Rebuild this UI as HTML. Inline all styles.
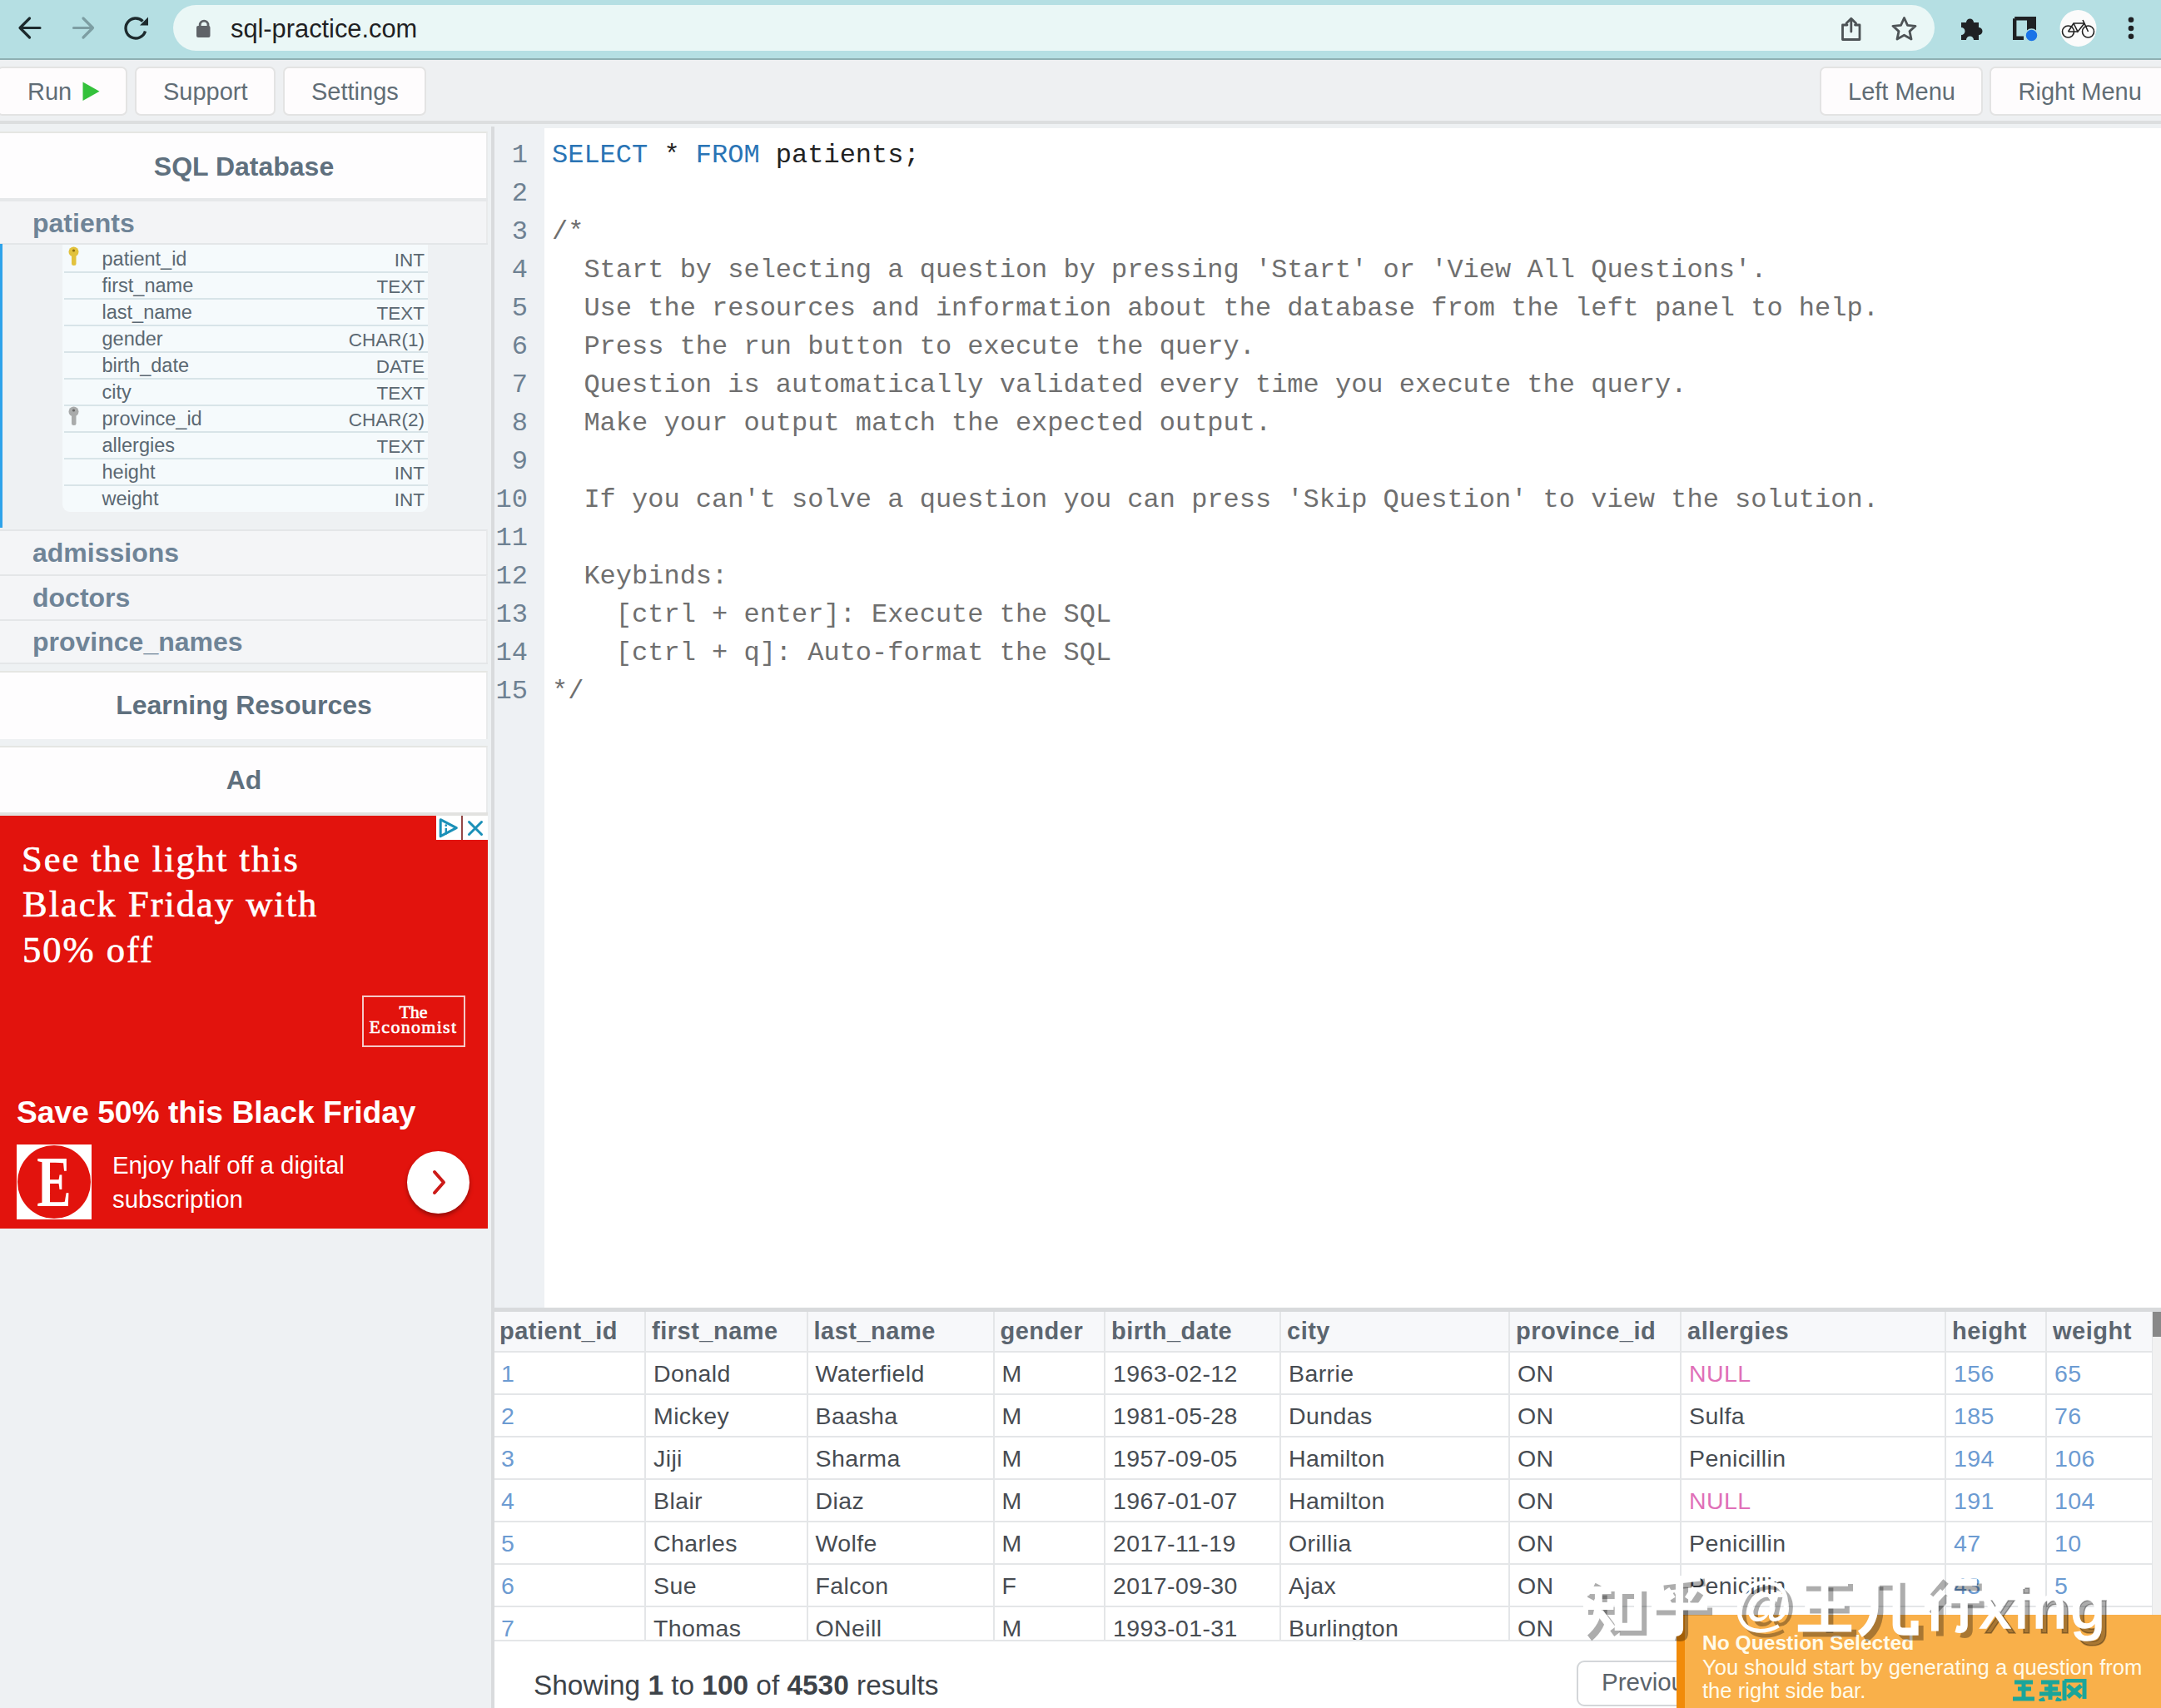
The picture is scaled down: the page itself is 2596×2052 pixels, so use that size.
<!DOCTYPE html><html><head><meta charset="utf-8"><style>html,body{margin:0;padding:0;width:2596px;height:2052px;overflow:hidden;position:relative}b{font-weight:700}</style></head><body><div style="position:absolute;left:0px;top:0px;width:2596px;height:2052px;background:#eef1f3"></div>
<div style="position:absolute;left:0px;top:0px;width:2596px;height:70px;background:#b5dfe3"></div>
<div style="position:absolute;left:0px;top:70px;width:2596px;height:2px;background:#8fb0b3"></div>
<svg style="position:absolute;left:0;top:0" width="220" height="70">
<g fill="none" stroke="#1d2a2d" stroke-width="3.2" stroke-linecap="round" stroke-linejoin="round">
<path d="M48 33.5 H25 M35.5 22 L24 33.5 L35.5 45"/></g>
<g fill="none" stroke="#7d9ea3" stroke-width="3.2" stroke-linecap="round" stroke-linejoin="round">
<path d="M88.5 33.5 H111.5 M100 22 L111.5 33.5 L100 45"/></g>
<g fill="none" stroke="#1d2a2d" stroke-width="3.4">
<path d="M174.5 37.5 A12 12 0 1 1 171.5 25.5"/></g>
<path d="M168 30.5 L178 30.5 L178 20.5 Z" fill="#1d2a2d"/>
</svg>
<div style="position:absolute;left:208px;top:6px;width:2116px;height:55px;background:#eaf7f6;border-radius:28px"></div>
<svg style="position:absolute;left:230px;top:18px" width="30" height="32">
<path d="M10.2 14 V12 A4.9 4.9 0 0 1 20 12 V14" fill="none" stroke="#5f6368" stroke-width="2.8"/>
<rect x="6" y="13" width="16.5" height="14" rx="2" fill="#5f6368"/></svg>
<div style="position:absolute;left:277px;top:12.83px;font:400 30.8px/43px 'Liberation Sans', sans-serif;color:#1f2123;white-space:pre;">sql-practice.com</div>
<svg style="position:absolute;left:2190px;top:0" width="406" height="70">
<g fill="none" stroke="#4d5356" stroke-width="2.8" stroke-linejoin="round" stroke-linecap="round">
<path d="M33.8 22.5 L33.8 38 M28 28 L33.8 22.2 L39.6 28"/>
<path d="M38.5 30 H44 V47.5 H23.5 V30 H29"/>
<path d="M97.5 21.5 L101.5 30.3 L111 31.3 L104 37.6 L106 47 L97.5 42.2 L89 47 L91 37.6 L84 31.3 L93.5 30.3 Z"/>
</g>
<path d="M166 27 h6 a4.5 4.5 0 0 1 9 0 h6 v6 a4.5 4.5 0 0 1 0 9 v6 h-6 a4.5 4.5 0 0 0 -9 0 h-6 v-6 a4.5 4.5 0 0 0 0 -9 z" fill="#1f2124"/>
<path d="M230.2 22.2 H253.8 V36 M230.2 22.2 V45.8 H241" fill="none" stroke="#1f2124" stroke-width="4.4"/><rect x="245" y="20" width="11" height="17" fill="#1f2124"/>
<circle cx="250.5" cy="42.5" r="7.5" fill="#1a73e8" stroke="#b5dfe3" stroke-width="1.5"/>
<circle cx="306.5" cy="34" r="22" fill="#fbfbfb"/>
<g fill="none" stroke="#222" stroke-width="1.6"><circle cx="294.5" cy="38" r="7"/><circle cx="318.5" cy="38" r="7"/>
<path d="M294.5 38 L301 28 L314 28 L318.5 38 M301 28 L306 38 L314 28 M306 38 L294.5 38 M312 24 L314 28"/></g>
<circle cx="370" cy="23.7" r="3.3" fill="#1f2124"/><circle cx="370" cy="34" r="3.3" fill="#1f2124"/><circle cx="370" cy="43.8" r="3.3" fill="#1f2124"/>
</svg>
<div style="position:absolute;left:0px;top:72px;width:2596px;height:73px;background:#eef0f2"></div>
<div style="position:absolute;left:0px;top:145px;width:2596px;height:4px;background:#dcdedf"></div>
<div style="position:absolute;left:-4px;top:80px;width:157px;height:59px;background:#fefcfd;border:2px solid #e3e3e3;border-radius:7px;box-sizing:border-box"></div>
<div style="position:absolute;left:33px;top:90.45px;font:400 29px/41px 'Liberation Sans', sans-serif;color:#616d76;white-space:pre;">Run</div>
<svg style="position:absolute;left:97px;top:96px" width="26" height="28"><path d="M2.5 2.5 L22.5 13.8 L2.5 25 Z" fill="#34c13b"/></svg>
<div style="position:absolute;left:162px;top:80px;width:169px;height:59px;background:#fefcfd;border:2px solid #e3e3e3;border-radius:7px;box-sizing:border-box"></div>
<div style="position:absolute;left:196px;top:90.45px;font:400 29px/41px 'Liberation Sans', sans-serif;color:#616d76;white-space:pre;">Support</div>
<div style="position:absolute;left:340px;top:80px;width:172px;height:59px;background:#fefcfd;border:2px solid #e3e3e3;border-radius:7px;box-sizing:border-box"></div>
<div style="position:absolute;left:374px;top:90.45px;font:400 29px/41px 'Liberation Sans', sans-serif;color:#616d76;white-space:pre;">Settings</div>
<div style="position:absolute;left:2186px;top:80px;width:196px;height:59px;background:#fefcfd;border:2px solid #e3e3e3;border-radius:7px;box-sizing:border-box"></div>
<div style="position:absolute;left:2220px;top:90.45px;font:400 29px/41px 'Liberation Sans', sans-serif;color:#616d76;white-space:pre;">Left Menu</div>
<div style="position:absolute;left:2390px;top:80px;width:222px;height:59px;background:#fefcfd;border:2px solid #e3e3e3;border-radius:7px;box-sizing:border-box"></div>
<div style="position:absolute;left:2424.5px;top:90.45px;font:400 29px/41px 'Liberation Sans', sans-serif;color:#616d76;white-space:pre;">Right Menu</div>
<div style="position:absolute;left:0px;top:157.5px;width:586px;height:82.5px;background:#fefdfe;border-top:2px solid #e5e6e3;border-right:2px solid #e9eaeb;box-sizing:border-box"></div>
<div style="position:absolute;left:-1207px;width:3000px;text-align:center;top:178.41px;font:700 32px/45px 'Liberation Sans', sans-serif;color:#5f707e;white-space:pre;">SQL Database</div>
<div style="position:absolute;left:0px;top:238px;width:586px;height:4px;background:#e6e8ea"></div>
<div style="position:absolute;left:0px;top:242px;width:586px;height:51px;background:#f3f4f6;border-right:2px solid #e9eaeb;box-sizing:border-box"></div>
<div style="position:absolute;left:0px;top:292px;width:586px;height:2px;background:#e3e6e8"></div>
<div style="position:absolute;left:39px;top:246.41px;font:700 32px/45px 'Liberation Sans', sans-serif;color:#6f8497;white-space:pre;">patients</div>
<div style="position:absolute;left:0px;top:293px;width:3px;height:341px;background:#2ea3ea"></div>
<div style="position:absolute;left:75px;top:294px;width:439px;height:321px;background:#f5fafc;border-radius:0 0 9px 9px"></div>
<div style="position:absolute;left:122.5px;top:295.36px;font:400 23.5px/33px 'Liberation Sans', sans-serif;color:#5b6872;white-space:pre;">patient_id</div>
<div style="position:absolute;left:-2490px;width:3000px;text-align:right;top:296.70px;font:400 22.5px/31px 'Liberation Sans', sans-serif;color:#5b6872;white-space:pre;">INT</div>
<div style="position:absolute;left:77px;top:326px;width:437px;height:2px;background:#d8e4e8"></div>
<div style="position:absolute;left:122.5px;top:327.36px;font:400 23.5px/33px 'Liberation Sans', sans-serif;color:#5b6872;white-space:pre;">first_name</div>
<div style="position:absolute;left:-2490px;width:3000px;text-align:right;top:328.70px;font:400 22.5px/31px 'Liberation Sans', sans-serif;color:#5b6872;white-space:pre;">TEXT</div>
<div style="position:absolute;left:77px;top:358px;width:437px;height:2px;background:#d8e4e8"></div>
<div style="position:absolute;left:122.5px;top:359.36px;font:400 23.5px/33px 'Liberation Sans', sans-serif;color:#5b6872;white-space:pre;">last_name</div>
<div style="position:absolute;left:-2490px;width:3000px;text-align:right;top:360.70px;font:400 22.5px/31px 'Liberation Sans', sans-serif;color:#5b6872;white-space:pre;">TEXT</div>
<div style="position:absolute;left:77px;top:390px;width:437px;height:2px;background:#d8e4e8"></div>
<div style="position:absolute;left:122.5px;top:391.36px;font:400 23.5px/33px 'Liberation Sans', sans-serif;color:#5b6872;white-space:pre;">gender</div>
<div style="position:absolute;left:-2490px;width:3000px;text-align:right;top:392.70px;font:400 22.5px/31px 'Liberation Sans', sans-serif;color:#5b6872;white-space:pre;">CHAR(1)</div>
<div style="position:absolute;left:77px;top:422px;width:437px;height:2px;background:#d8e4e8"></div>
<div style="position:absolute;left:122.5px;top:423.36px;font:400 23.5px/33px 'Liberation Sans', sans-serif;color:#5b6872;white-space:pre;">birth_date</div>
<div style="position:absolute;left:-2490px;width:3000px;text-align:right;top:424.70px;font:400 22.5px/31px 'Liberation Sans', sans-serif;color:#5b6872;white-space:pre;">DATE</div>
<div style="position:absolute;left:77px;top:454px;width:437px;height:2px;background:#d8e4e8"></div>
<div style="position:absolute;left:122.5px;top:455.36px;font:400 23.5px/33px 'Liberation Sans', sans-serif;color:#5b6872;white-space:pre;">city</div>
<div style="position:absolute;left:-2490px;width:3000px;text-align:right;top:456.70px;font:400 22.5px/31px 'Liberation Sans', sans-serif;color:#5b6872;white-space:pre;">TEXT</div>
<div style="position:absolute;left:77px;top:486px;width:437px;height:2px;background:#d8e4e8"></div>
<div style="position:absolute;left:122.5px;top:487.36px;font:400 23.5px/33px 'Liberation Sans', sans-serif;color:#5b6872;white-space:pre;">province_id</div>
<div style="position:absolute;left:-2490px;width:3000px;text-align:right;top:488.70px;font:400 22.5px/31px 'Liberation Sans', sans-serif;color:#5b6872;white-space:pre;">CHAR(2)</div>
<div style="position:absolute;left:77px;top:518px;width:437px;height:2px;background:#d8e4e8"></div>
<div style="position:absolute;left:122.5px;top:519.36px;font:400 23.5px/33px 'Liberation Sans', sans-serif;color:#5b6872;white-space:pre;">allergies</div>
<div style="position:absolute;left:-2490px;width:3000px;text-align:right;top:520.70px;font:400 22.5px/31px 'Liberation Sans', sans-serif;color:#5b6872;white-space:pre;">TEXT</div>
<div style="position:absolute;left:77px;top:550px;width:437px;height:2px;background:#d8e4e8"></div>
<div style="position:absolute;left:122.5px;top:551.36px;font:400 23.5px/33px 'Liberation Sans', sans-serif;color:#5b6872;white-space:pre;">height</div>
<div style="position:absolute;left:-2490px;width:3000px;text-align:right;top:552.70px;font:400 22.5px/31px 'Liberation Sans', sans-serif;color:#5b6872;white-space:pre;">INT</div>
<div style="position:absolute;left:77px;top:582px;width:437px;height:2px;background:#d8e4e8"></div>
<div style="position:absolute;left:122.5px;top:583.36px;font:400 23.5px/33px 'Liberation Sans', sans-serif;color:#5b6872;white-space:pre;">weight</div>
<div style="position:absolute;left:-2490px;width:3000px;text-align:right;top:584.70px;font:400 22.5px/31px 'Liberation Sans', sans-serif;color:#5b6872;white-space:pre;">INT</div>
<svg style="position:absolute;left:81px;top:296px" width="16" height="26">
<circle cx="7.5" cy="6.5" r="6" fill="#e2c23d"/><rect x="5" y="10" width="5.5" height="13" rx="2.5" fill="#e2c23d"/>
<circle cx="7.5" cy="5" r="1.6" fill="#8a6d10"/></svg>
<svg style="position:absolute;left:81px;top:488px" width="16" height="26">
<circle cx="7.5" cy="6.5" r="6" fill="#a9abab"/><rect x="5" y="10" width="5.5" height="13" rx="2.5" fill="#a9abab"/>
<circle cx="7.5" cy="5" r="1.6" fill="#666"/></svg>
<div style="position:absolute;left:0px;top:636px;width:586px;height:54px;background:#f4f5f7;border-top:2px solid #e4e6e8;border-right:2px solid #e9eaeb;box-sizing:border-box"></div>
<div style="position:absolute;left:39px;top:642.41px;font:700 32px/45px 'Liberation Sans', sans-serif;color:#6f8497;white-space:pre;">admissions</div>
<div style="position:absolute;left:0px;top:690px;width:586px;height:54px;background:#f4f5f7;border-top:2px solid #e4e6e8;border-right:2px solid #e9eaeb;box-sizing:border-box"></div>
<div style="position:absolute;left:39px;top:696.41px;font:700 32px/45px 'Liberation Sans', sans-serif;color:#6f8497;white-space:pre;">doctors</div>
<div style="position:absolute;left:0px;top:744px;width:586px;height:53px;background:#f4f5f7;border-top:2px solid #e4e6e8;border-right:2px solid #e9eaeb;box-sizing:border-box"></div>
<div style="position:absolute;left:39px;top:749.41px;font:700 32px/45px 'Liberation Sans', sans-serif;color:#6f8497;white-space:pre;">province_names</div>
<div style="position:absolute;left:0px;top:796px;width:586px;height:2px;background:#e4e6e8"></div>
<div style="position:absolute;left:0px;top:806px;width:586px;height:82px;background:#fefdfe;border-top:2px solid #e5e6e3;border-right:2px solid #e9eaeb;box-sizing:border-box"></div>
<div style="position:absolute;left:-1207px;width:3000px;text-align:center;top:825.41px;font:700 32px/45px 'Liberation Sans', sans-serif;color:#5f707e;white-space:pre;">Learning Resources</div>
<div style="position:absolute;left:0px;top:896px;width:586px;height:84px;background:#fefdfe;border-top:2px solid #e5e6e3;border-right:2px solid #e9eaeb;box-sizing:border-box"></div>
<div style="position:absolute;left:-1207px;width:3000px;text-align:center;top:915.41px;font:700 32px/45px 'Liberation Sans', sans-serif;color:#5f707e;white-space:pre;">Ad</div>
<div style="position:absolute;left:0px;top:980px;width:586px;height:496px;background:#e2130d"></div>
<div style="position:absolute;left:524px;top:980px;width:62px;height:29px;background:#fff"></div>
<svg style="position:absolute;left:524px;top:980px" width="62" height="29">
<path d="M5.2 4.7 L24.3 14.7 L5.2 24.7 Z" fill="none" stroke="#1b90b8" stroke-width="3" stroke-linejoin="round"/>
<path d="M11.8 14.8 V22.4" stroke="#1b90b8" stroke-width="2.4"/><circle cx="11.8" cy="11.7" r="1.4" fill="#1b90b8"/>
<rect x="30.2" y="0" width="1.6" height="29" fill="#7a1a1a"/>
<path d="M39.5 7.5 L54.5 22.5 M54.5 7.5 L39.5 22.5" stroke="#1b90b8" stroke-width="3" stroke-linecap="round"/>
</svg>
<div style="position:absolute;left:0px;top:976px;width:586px;height:4px;background:#e2e2e0"></div>
<div style="position:absolute;left:26px;top:1000.98px;font:400 44.5px/62px 'Liberation Serif', serif;color:#fff;white-space:pre;letter-spacing:2.0px;-webkit-text-stroke:0.7px #fff">See the light this</div>
<div style="position:absolute;left:27px;top:1055.48px;font:400 44.5px/62px 'Liberation Serif', serif;color:#fff;white-space:pre;letter-spacing:2.0px;-webkit-text-stroke:0.7px #fff">Black Friday with</div>
<div style="position:absolute;left:27px;top:1109.58px;font:400 44.5px/62px 'Liberation Serif', serif;color:#fff;white-space:pre;letter-spacing:2.0px;-webkit-text-stroke:0.7px #fff">50% off</div>
<div style="position:absolute;left:434.5px;top:1196px;width:124.10000000000002px;height:62px;border:2px solid #f5c9c7;box-sizing:border-box"></div>
<div style="position:absolute;left:-1003.5px;width:3000px;text-align:center;top:1199.78px;font:400 22px/31px 'Liberation Serif', serif;color:#fff;white-space:pre;-webkit-text-stroke:0.6px #fff">The</div>
<div style="position:absolute;left:-1003.5px;width:3000px;text-align:center;top:1217.78px;font:400 22px/31px 'Liberation Serif', serif;color:#fff;white-space:pre;letter-spacing:1.3px;-webkit-text-stroke:0.6px #fff">Economist</div>
<div style="position:absolute;left:20px;top:1310.11px;font:700 37.2px/52px 'Liberation Sans', sans-serif;color:#fff;white-space:pre;">Save 50% this Black Friday</div>
<div style="position:absolute;left:20px;top:1375px;width:90px;height:90px;background:#fff"></div>
<div style="position:absolute;left:21px;top:1376px;width:88px;height:88px;border-radius:50%;background:#e2130d"></div>
<div style="position:absolute;left:-1435px;width:3000px;text-align:center;top:1359.97px;font:700 86px/120px 'Liberation Serif', serif;color:#fff;white-space:pre;transform:scaleX(0.72);transform-origin:1500px 0">E</div>
<div style="position:absolute;left:135px;top:1379.31px;font:400 29.4px/41px 'Liberation Sans', sans-serif;color:#fff;white-space:pre;">Enjoy half off a digital</div>
<div style="position:absolute;left:135px;top:1420.31px;font:400 29.4px/41px 'Liberation Sans', sans-serif;color:#fff;white-space:pre;">subscription</div>
<div style="position:absolute;left:489px;top:1383px;width:75px;height:75px;border-radius:50%;background:#fff;box-shadow:0 3px 5px rgba(0,0,0,0.35)"></div>
<svg style="position:absolute;left:489px;top:1383px" width="75" height="75"><path d="M33 25 L44 37.5 L33 50" fill="none" stroke="#cc1a18" stroke-width="4" stroke-linecap="round" stroke-linejoin="round"/></svg>
<div style="position:absolute;left:590px;top:152px;width:4px;height:1900px;background:#d9dbdd"></div>
<div style="position:absolute;left:594px;top:152px;width:60px;height:1419px;background:#eef1f4"></div>
<div style="position:absolute;left:654px;top:154px;width:1942px;height:1417px;background:#fff"></div>
<div style="position:absolute;left:-2366px;width:3000px;text-align:right;top:163.97px;font:400 32px/45px 'Liberation Mono', monospace;color:#6e8192;white-space:pre;">1</div>
<div style="position:absolute;left:-2366px;width:3000px;text-align:right;top:209.97px;font:400 32px/45px 'Liberation Mono', monospace;color:#6e8192;white-space:pre;">2</div>
<div style="position:absolute;left:-2366px;width:3000px;text-align:right;top:255.97px;font:400 32px/45px 'Liberation Mono', monospace;color:#6e8192;white-space:pre;">3</div>
<div style="position:absolute;left:-2366px;width:3000px;text-align:right;top:301.97px;font:400 32px/45px 'Liberation Mono', monospace;color:#6e8192;white-space:pre;">4</div>
<div style="position:absolute;left:-2366px;width:3000px;text-align:right;top:347.97px;font:400 32px/45px 'Liberation Mono', monospace;color:#6e8192;white-space:pre;">5</div>
<div style="position:absolute;left:-2366px;width:3000px;text-align:right;top:393.97px;font:400 32px/45px 'Liberation Mono', monospace;color:#6e8192;white-space:pre;">6</div>
<div style="position:absolute;left:-2366px;width:3000px;text-align:right;top:439.97px;font:400 32px/45px 'Liberation Mono', monospace;color:#6e8192;white-space:pre;">7</div>
<div style="position:absolute;left:-2366px;width:3000px;text-align:right;top:485.97px;font:400 32px/45px 'Liberation Mono', monospace;color:#6e8192;white-space:pre;">8</div>
<div style="position:absolute;left:-2366px;width:3000px;text-align:right;top:531.97px;font:400 32px/45px 'Liberation Mono', monospace;color:#6e8192;white-space:pre;">9</div>
<div style="position:absolute;left:-2366px;width:3000px;text-align:right;top:577.97px;font:400 32px/45px 'Liberation Mono', monospace;color:#6e8192;white-space:pre;">10</div>
<div style="position:absolute;left:-2366px;width:3000px;text-align:right;top:623.97px;font:400 32px/45px 'Liberation Mono', monospace;color:#6e8192;white-space:pre;">11</div>
<div style="position:absolute;left:-2366px;width:3000px;text-align:right;top:669.97px;font:400 32px/45px 'Liberation Mono', monospace;color:#6e8192;white-space:pre;">12</div>
<div style="position:absolute;left:-2366px;width:3000px;text-align:right;top:715.97px;font:400 32px/45px 'Liberation Mono', monospace;color:#6e8192;white-space:pre;">13</div>
<div style="position:absolute;left:-2366px;width:3000px;text-align:right;top:761.97px;font:400 32px/45px 'Liberation Mono', monospace;color:#6e8192;white-space:pre;">14</div>
<div style="position:absolute;left:-2366px;width:3000px;text-align:right;top:807.97px;font:400 32px/45px 'Liberation Mono', monospace;color:#6e8192;white-space:pre;">15</div>
<div style="position:absolute;left:663px;top:163.97px;font:400 32px/45px 'Liberation Mono', monospace;color:#6f6f6f;white-space:pre;"><span style="color:#2a74b5">SELECT</span><span style="color:#222"> * </span><span style="color:#2a74b5">FROM</span><span style="color:#222"> patients;</span></div>
<div style="position:absolute;left:663px;top:255.97px;font:400 32px/45px 'Liberation Mono', monospace;color:#6f6f6f;white-space:pre;"><span style="color:#6f6f6f">/*</span></div>
<div style="position:absolute;left:663px;top:301.97px;font:400 32px/45px 'Liberation Mono', monospace;color:#6f6f6f;white-space:pre;"><span style="color:#6f6f6f">  Start by selecting a question by pressing 'Start' or 'View All Questions'.</span></div>
<div style="position:absolute;left:663px;top:347.97px;font:400 32px/45px 'Liberation Mono', monospace;color:#6f6f6f;white-space:pre;"><span style="color:#6f6f6f">  Use the resources and information about the database from the left panel to help.</span></div>
<div style="position:absolute;left:663px;top:393.97px;font:400 32px/45px 'Liberation Mono', monospace;color:#6f6f6f;white-space:pre;"><span style="color:#6f6f6f">  Press the run button to execute the query.</span></div>
<div style="position:absolute;left:663px;top:439.97px;font:400 32px/45px 'Liberation Mono', monospace;color:#6f6f6f;white-space:pre;"><span style="color:#6f6f6f">  Question is automatically validated every time you execute the query.</span></div>
<div style="position:absolute;left:663px;top:485.97px;font:400 32px/45px 'Liberation Mono', monospace;color:#6f6f6f;white-space:pre;"><span style="color:#6f6f6f">  Make your output match the expected output.</span></div>
<div style="position:absolute;left:663px;top:577.97px;font:400 32px/45px 'Liberation Mono', monospace;color:#6f6f6f;white-space:pre;"><span style="color:#6f6f6f">  If you can't solve a question you can press 'Skip Question' to view the solution.</span></div>
<div style="position:absolute;left:663px;top:669.97px;font:400 32px/45px 'Liberation Mono', monospace;color:#6f6f6f;white-space:pre;"><span style="color:#6f6f6f">  Keybinds:</span></div>
<div style="position:absolute;left:663px;top:715.97px;font:400 32px/45px 'Liberation Mono', monospace;color:#6f6f6f;white-space:pre;"><span style="color:#6f6f6f">    [ctrl + enter]: Execute the SQL</span></div>
<div style="position:absolute;left:663px;top:761.97px;font:400 32px/45px 'Liberation Mono', monospace;color:#6f6f6f;white-space:pre;"><span style="color:#6f6f6f">    [ctrl + q]: Auto-format the SQL</span></div>
<div style="position:absolute;left:663px;top:807.97px;font:400 32px/45px 'Liberation Mono', monospace;color:#6f6f6f;white-space:pre;"><span style="color:#6f6f6f">*/</span></div>
<div style="position:absolute;left:594px;top:1571px;width:2002px;height:5px;background:#d8dadc"></div>
<div style="position:absolute;left:594px;top:1576px;width:2002px;height:476px;background:#fff"></div>
<div style="position:absolute;left:594px;top:1576px;width:1992px;height:48px;background:#f7f8fa"></div>
<div style="position:absolute;left:594px;top:1576px;width:1992px;height:396px;overflow:hidden">
<div style="position:absolute;left:0px;top:47px;width:1992px;height:2px;background:#e4e6e8"></div>
<div style="position:absolute;left:0px;top:98px;width:1992px;height:2px;background:#e4e6e8"></div>
<div style="position:absolute;left:0px;top:149px;width:1992px;height:2px;background:#e4e6e8"></div>
<div style="position:absolute;left:0px;top:200px;width:1992px;height:2px;background:#e4e6e8"></div>
<div style="position:absolute;left:0px;top:251px;width:1992px;height:2px;background:#e4e6e8"></div>
<div style="position:absolute;left:0px;top:302px;width:1992px;height:2px;background:#e4e6e8"></div>
<div style="position:absolute;left:0px;top:353px;width:1992px;height:2px;background:#e4e6e8"></div>
<div style="position:absolute;left:0px;top:404px;width:1992px;height:2px;background:#e4e6e8"></div>
<div style="position:absolute;left:180px;top:0px;width:2px;height:396px;background:#e4e6e8"></div>
<div style="position:absolute;left:374.5px;top:0px;width:2.0px;height:396px;background:#e4e6e8"></div>
<div style="position:absolute;left:598.5px;top:0px;width:2.0px;height:396px;background:#e4e6e8"></div>
<div style="position:absolute;left:732px;top:0px;width:2px;height:396px;background:#e4e6e8"></div>
<div style="position:absolute;left:943px;top:0px;width:2px;height:396px;background:#e4e6e8"></div>
<div style="position:absolute;left:1218px;top:0px;width:2px;height:396px;background:#e4e6e8"></div>
<div style="position:absolute;left:1424px;top:0px;width:2px;height:396px;background:#e4e6e8"></div>
<div style="position:absolute;left:1742px;top:0px;width:2px;height:396px;background:#e4e6e8"></div>
<div style="position:absolute;left:1863px;top:0px;width:2px;height:396px;background:#e4e6e8"></div>
<div style="position:absolute;left:1991px;top:0px;width:2px;height:396px;background:#e4e6e8"></div>
<div style="position:absolute;left:6px;top:2.85px;font:700 29px/41px 'Liberation Sans', sans-serif;color:#5c6670;white-space:pre;letter-spacing:0.5px">patient_id</div>
<div style="position:absolute;left:189px;top:2.85px;font:700 29px/41px 'Liberation Sans', sans-serif;color:#5c6670;white-space:pre;letter-spacing:0.5px">first_name</div>
<div style="position:absolute;left:383.5px;top:2.85px;font:700 29px/41px 'Liberation Sans', sans-serif;color:#5c6670;white-space:pre;letter-spacing:0.5px">last_name</div>
<div style="position:absolute;left:607.5px;top:2.85px;font:700 29px/41px 'Liberation Sans', sans-serif;color:#5c6670;white-space:pre;letter-spacing:0.5px">gender</div>
<div style="position:absolute;left:741px;top:2.85px;font:700 29px/41px 'Liberation Sans', sans-serif;color:#5c6670;white-space:pre;letter-spacing:0.5px">birth_date</div>
<div style="position:absolute;left:952px;top:2.85px;font:700 29px/41px 'Liberation Sans', sans-serif;color:#5c6670;white-space:pre;letter-spacing:0.5px">city</div>
<div style="position:absolute;left:1227px;top:2.85px;font:700 29px/41px 'Liberation Sans', sans-serif;color:#5c6670;white-space:pre;letter-spacing:0.5px">province_id</div>
<div style="position:absolute;left:1433px;top:2.85px;font:700 29px/41px 'Liberation Sans', sans-serif;color:#5c6670;white-space:pre;letter-spacing:0.5px">allergies</div>
<div style="position:absolute;left:1751px;top:2.85px;font:700 29px/41px 'Liberation Sans', sans-serif;color:#5c6670;white-space:pre;letter-spacing:0.5px">height</div>
<div style="position:absolute;left:1872px;top:2.85px;font:700 29px/41px 'Liberation Sans', sans-serif;color:#5c6670;white-space:pre;letter-spacing:0.5px">weight</div>
<div style="position:absolute;left:8px;top:53.62px;font:400 28.5px/40px 'Liberation Sans', sans-serif;color:#6c9bd2;white-space:pre;letter-spacing:0.4px">1</div>
<div style="position:absolute;left:191px;top:53.62px;font:400 28.5px/40px 'Liberation Sans', sans-serif;color:#474c52;white-space:pre;letter-spacing:0.4px">Donald</div>
<div style="position:absolute;left:385.5px;top:53.62px;font:400 28.5px/40px 'Liberation Sans', sans-serif;color:#474c52;white-space:pre;letter-spacing:0.4px">Waterfield</div>
<div style="position:absolute;left:609.5px;top:53.62px;font:400 28.5px/40px 'Liberation Sans', sans-serif;color:#474c52;white-space:pre;letter-spacing:0.4px">M</div>
<div style="position:absolute;left:743px;top:53.62px;font:400 28.5px/40px 'Liberation Sans', sans-serif;color:#474c52;white-space:pre;letter-spacing:0.4px">1963-02-12</div>
<div style="position:absolute;left:954px;top:53.62px;font:400 28.5px/40px 'Liberation Sans', sans-serif;color:#474c52;white-space:pre;letter-spacing:0.4px">Barrie</div>
<div style="position:absolute;left:1229px;top:53.62px;font:400 28.5px/40px 'Liberation Sans', sans-serif;color:#474c52;white-space:pre;letter-spacing:0.4px">ON</div>
<div style="position:absolute;left:1435px;top:53.62px;font:400 28.5px/40px 'Liberation Sans', sans-serif;color:#e070b8;white-space:pre;letter-spacing:0.4px">NULL</div>
<div style="position:absolute;left:1753px;top:53.62px;font:400 28.5px/40px 'Liberation Sans', sans-serif;color:#6c9bd2;white-space:pre;letter-spacing:0.4px">156</div>
<div style="position:absolute;left:1874px;top:53.62px;font:400 28.5px/40px 'Liberation Sans', sans-serif;color:#6c9bd2;white-space:pre;letter-spacing:0.4px">65</div>
<div style="position:absolute;left:8px;top:104.62px;font:400 28.5px/40px 'Liberation Sans', sans-serif;color:#6c9bd2;white-space:pre;letter-spacing:0.4px">2</div>
<div style="position:absolute;left:191px;top:104.62px;font:400 28.5px/40px 'Liberation Sans', sans-serif;color:#474c52;white-space:pre;letter-spacing:0.4px">Mickey</div>
<div style="position:absolute;left:385.5px;top:104.62px;font:400 28.5px/40px 'Liberation Sans', sans-serif;color:#474c52;white-space:pre;letter-spacing:0.4px">Baasha</div>
<div style="position:absolute;left:609.5px;top:104.62px;font:400 28.5px/40px 'Liberation Sans', sans-serif;color:#474c52;white-space:pre;letter-spacing:0.4px">M</div>
<div style="position:absolute;left:743px;top:104.62px;font:400 28.5px/40px 'Liberation Sans', sans-serif;color:#474c52;white-space:pre;letter-spacing:0.4px">1981-05-28</div>
<div style="position:absolute;left:954px;top:104.62px;font:400 28.5px/40px 'Liberation Sans', sans-serif;color:#474c52;white-space:pre;letter-spacing:0.4px">Dundas</div>
<div style="position:absolute;left:1229px;top:104.62px;font:400 28.5px/40px 'Liberation Sans', sans-serif;color:#474c52;white-space:pre;letter-spacing:0.4px">ON</div>
<div style="position:absolute;left:1435px;top:104.62px;font:400 28.5px/40px 'Liberation Sans', sans-serif;color:#474c52;white-space:pre;letter-spacing:0.4px">Sulfa</div>
<div style="position:absolute;left:1753px;top:104.62px;font:400 28.5px/40px 'Liberation Sans', sans-serif;color:#6c9bd2;white-space:pre;letter-spacing:0.4px">185</div>
<div style="position:absolute;left:1874px;top:104.62px;font:400 28.5px/40px 'Liberation Sans', sans-serif;color:#6c9bd2;white-space:pre;letter-spacing:0.4px">76</div>
<div style="position:absolute;left:8px;top:155.62px;font:400 28.5px/40px 'Liberation Sans', sans-serif;color:#6c9bd2;white-space:pre;letter-spacing:0.4px">3</div>
<div style="position:absolute;left:191px;top:155.62px;font:400 28.5px/40px 'Liberation Sans', sans-serif;color:#474c52;white-space:pre;letter-spacing:0.4px">Jiji</div>
<div style="position:absolute;left:385.5px;top:155.62px;font:400 28.5px/40px 'Liberation Sans', sans-serif;color:#474c52;white-space:pre;letter-spacing:0.4px">Sharma</div>
<div style="position:absolute;left:609.5px;top:155.62px;font:400 28.5px/40px 'Liberation Sans', sans-serif;color:#474c52;white-space:pre;letter-spacing:0.4px">M</div>
<div style="position:absolute;left:743px;top:155.62px;font:400 28.5px/40px 'Liberation Sans', sans-serif;color:#474c52;white-space:pre;letter-spacing:0.4px">1957-09-05</div>
<div style="position:absolute;left:954px;top:155.62px;font:400 28.5px/40px 'Liberation Sans', sans-serif;color:#474c52;white-space:pre;letter-spacing:0.4px">Hamilton</div>
<div style="position:absolute;left:1229px;top:155.62px;font:400 28.5px/40px 'Liberation Sans', sans-serif;color:#474c52;white-space:pre;letter-spacing:0.4px">ON</div>
<div style="position:absolute;left:1435px;top:155.62px;font:400 28.5px/40px 'Liberation Sans', sans-serif;color:#474c52;white-space:pre;letter-spacing:0.4px">Penicillin</div>
<div style="position:absolute;left:1753px;top:155.62px;font:400 28.5px/40px 'Liberation Sans', sans-serif;color:#6c9bd2;white-space:pre;letter-spacing:0.4px">194</div>
<div style="position:absolute;left:1874px;top:155.62px;font:400 28.5px/40px 'Liberation Sans', sans-serif;color:#6c9bd2;white-space:pre;letter-spacing:0.4px">106</div>
<div style="position:absolute;left:8px;top:206.62px;font:400 28.5px/40px 'Liberation Sans', sans-serif;color:#6c9bd2;white-space:pre;letter-spacing:0.4px">4</div>
<div style="position:absolute;left:191px;top:206.62px;font:400 28.5px/40px 'Liberation Sans', sans-serif;color:#474c52;white-space:pre;letter-spacing:0.4px">Blair</div>
<div style="position:absolute;left:385.5px;top:206.62px;font:400 28.5px/40px 'Liberation Sans', sans-serif;color:#474c52;white-space:pre;letter-spacing:0.4px">Diaz</div>
<div style="position:absolute;left:609.5px;top:206.62px;font:400 28.5px/40px 'Liberation Sans', sans-serif;color:#474c52;white-space:pre;letter-spacing:0.4px">M</div>
<div style="position:absolute;left:743px;top:206.62px;font:400 28.5px/40px 'Liberation Sans', sans-serif;color:#474c52;white-space:pre;letter-spacing:0.4px">1967-01-07</div>
<div style="position:absolute;left:954px;top:206.62px;font:400 28.5px/40px 'Liberation Sans', sans-serif;color:#474c52;white-space:pre;letter-spacing:0.4px">Hamilton</div>
<div style="position:absolute;left:1229px;top:206.62px;font:400 28.5px/40px 'Liberation Sans', sans-serif;color:#474c52;white-space:pre;letter-spacing:0.4px">ON</div>
<div style="position:absolute;left:1435px;top:206.62px;font:400 28.5px/40px 'Liberation Sans', sans-serif;color:#e070b8;white-space:pre;letter-spacing:0.4px">NULL</div>
<div style="position:absolute;left:1753px;top:206.62px;font:400 28.5px/40px 'Liberation Sans', sans-serif;color:#6c9bd2;white-space:pre;letter-spacing:0.4px">191</div>
<div style="position:absolute;left:1874px;top:206.62px;font:400 28.5px/40px 'Liberation Sans', sans-serif;color:#6c9bd2;white-space:pre;letter-spacing:0.4px">104</div>
<div style="position:absolute;left:8px;top:257.62px;font:400 28.5px/40px 'Liberation Sans', sans-serif;color:#6c9bd2;white-space:pre;letter-spacing:0.4px">5</div>
<div style="position:absolute;left:191px;top:257.62px;font:400 28.5px/40px 'Liberation Sans', sans-serif;color:#474c52;white-space:pre;letter-spacing:0.4px">Charles</div>
<div style="position:absolute;left:385.5px;top:257.62px;font:400 28.5px/40px 'Liberation Sans', sans-serif;color:#474c52;white-space:pre;letter-spacing:0.4px">Wolfe</div>
<div style="position:absolute;left:609.5px;top:257.62px;font:400 28.5px/40px 'Liberation Sans', sans-serif;color:#474c52;white-space:pre;letter-spacing:0.4px">M</div>
<div style="position:absolute;left:743px;top:257.62px;font:400 28.5px/40px 'Liberation Sans', sans-serif;color:#474c52;white-space:pre;letter-spacing:0.4px">2017-11-19</div>
<div style="position:absolute;left:954px;top:257.62px;font:400 28.5px/40px 'Liberation Sans', sans-serif;color:#474c52;white-space:pre;letter-spacing:0.4px">Orillia</div>
<div style="position:absolute;left:1229px;top:257.62px;font:400 28.5px/40px 'Liberation Sans', sans-serif;color:#474c52;white-space:pre;letter-spacing:0.4px">ON</div>
<div style="position:absolute;left:1435px;top:257.62px;font:400 28.5px/40px 'Liberation Sans', sans-serif;color:#474c52;white-space:pre;letter-spacing:0.4px">Penicillin</div>
<div style="position:absolute;left:1753px;top:257.62px;font:400 28.5px/40px 'Liberation Sans', sans-serif;color:#6c9bd2;white-space:pre;letter-spacing:0.4px">47</div>
<div style="position:absolute;left:1874px;top:257.62px;font:400 28.5px/40px 'Liberation Sans', sans-serif;color:#6c9bd2;white-space:pre;letter-spacing:0.4px">10</div>
<div style="position:absolute;left:8px;top:308.62px;font:400 28.5px/40px 'Liberation Sans', sans-serif;color:#6c9bd2;white-space:pre;letter-spacing:0.4px">6</div>
<div style="position:absolute;left:191px;top:308.62px;font:400 28.5px/40px 'Liberation Sans', sans-serif;color:#474c52;white-space:pre;letter-spacing:0.4px">Sue</div>
<div style="position:absolute;left:385.5px;top:308.62px;font:400 28.5px/40px 'Liberation Sans', sans-serif;color:#474c52;white-space:pre;letter-spacing:0.4px">Falcon</div>
<div style="position:absolute;left:609.5px;top:308.62px;font:400 28.5px/40px 'Liberation Sans', sans-serif;color:#474c52;white-space:pre;letter-spacing:0.4px">F</div>
<div style="position:absolute;left:743px;top:308.62px;font:400 28.5px/40px 'Liberation Sans', sans-serif;color:#474c52;white-space:pre;letter-spacing:0.4px">2017-09-30</div>
<div style="position:absolute;left:954px;top:308.62px;font:400 28.5px/40px 'Liberation Sans', sans-serif;color:#474c52;white-space:pre;letter-spacing:0.4px">Ajax</div>
<div style="position:absolute;left:1229px;top:308.62px;font:400 28.5px/40px 'Liberation Sans', sans-serif;color:#474c52;white-space:pre;letter-spacing:0.4px">ON</div>
<div style="position:absolute;left:1435px;top:308.62px;font:400 28.5px/40px 'Liberation Sans', sans-serif;color:#474c52;white-space:pre;letter-spacing:0.4px">Penicillin</div>
<div style="position:absolute;left:1753px;top:308.62px;font:400 28.5px/40px 'Liberation Sans', sans-serif;color:#6c9bd2;white-space:pre;letter-spacing:0.4px">43</div>
<div style="position:absolute;left:1874px;top:308.62px;font:400 28.5px/40px 'Liberation Sans', sans-serif;color:#6c9bd2;white-space:pre;letter-spacing:0.4px">5</div>
<div style="position:absolute;left:8px;top:359.62px;font:400 28.5px/40px 'Liberation Sans', sans-serif;color:#6c9bd2;white-space:pre;letter-spacing:0.4px">7</div>
<div style="position:absolute;left:191px;top:359.62px;font:400 28.5px/40px 'Liberation Sans', sans-serif;color:#474c52;white-space:pre;letter-spacing:0.4px">Thomas</div>
<div style="position:absolute;left:385.5px;top:359.62px;font:400 28.5px/40px 'Liberation Sans', sans-serif;color:#474c52;white-space:pre;letter-spacing:0.4px">ONeill</div>
<div style="position:absolute;left:609.5px;top:359.62px;font:400 28.5px/40px 'Liberation Sans', sans-serif;color:#474c52;white-space:pre;letter-spacing:0.4px">M</div>
<div style="position:absolute;left:743px;top:359.62px;font:400 28.5px/40px 'Liberation Sans', sans-serif;color:#474c52;white-space:pre;letter-spacing:0.4px">1993-01-31</div>
<div style="position:absolute;left:954px;top:359.62px;font:400 28.5px/40px 'Liberation Sans', sans-serif;color:#474c52;white-space:pre;letter-spacing:0.4px">Burlington</div>
<div style="position:absolute;left:1229px;top:359.62px;font:400 28.5px/40px 'Liberation Sans', sans-serif;color:#474c52;white-space:pre;letter-spacing:0.4px">ON</div>
<div style="position:absolute;left:1435px;top:359.62px;font:400 28.5px/40px 'Liberation Sans', sans-serif;color:#474c52;white-space:pre;letter-spacing:0.4px">Penicillin</div>
<div style="position:absolute;left:1753px;top:359.62px;font:400 28.5px/40px 'Liberation Sans', sans-serif;color:#6c9bd2;white-space:pre;letter-spacing:0.4px">43</div>
<div style="position:absolute;left:1874px;top:359.62px;font:400 28.5px/40px 'Liberation Sans', sans-serif;color:#6c9bd2;white-space:pre;letter-spacing:0.4px">5</div>
</div>
<div style="position:absolute;left:594px;top:1970px;width:1992px;height:2px;background:#e4e6e8"></div>
<div style="position:absolute;left:2586px;top:1576px;width:10px;height:396px;background:#f1f1f1"></div>
<div style="position:absolute;left:2586px;top:1576px;width:10px;height:30px;background:#888"></div>
<div style="position:absolute;left:641px;top:2000.63px;font:400 33.4px/47px 'Liberation Sans', sans-serif;color:#3d4349;white-space:pre">Showing <b>1</b> to <b>100</b> of <b>4530</b> results</div>
<div style="position:absolute;left:1894px;top:1995px;width:206px;height:55px;background:#fff;border:2px solid #d3d6d9;border-radius:9px;box-sizing:border-box"></div>
<div style="position:absolute;left:1924px;top:2000.28px;font:400 29.5px/41px 'Liberation Sans', sans-serif;color:#5b636b;white-space:pre;">Previous</div>
<div style="position:absolute;left:2014px;top:1940px;width:582px;height:112px;background:#f9b04a"></div>
<div style="position:absolute;left:2014px;top:1940px;width:10px;height:112px;background:#f18b0a"></div>
<div style="position:absolute;left:2045px;top:1957.48px;font:700 24.6px/34px 'Liberation Sans', sans-serif;color:#fffbea;white-space:pre;">No Question Selected</div>
<div style="position:absolute;left:2045px;top:1985.13px;font:400 25.6px/36px 'Liberation Sans', sans-serif;color:#fffbea;white-space:pre;">You should start by generating a question from</div>
<div style="position:absolute;left:2045px;top:2012.63px;font:400 25.6px/36px 'Liberation Sans', sans-serif;color:#fffbea;white-space:pre;">the right side bar.</div>
<svg style="position:absolute;left:0;top:0;pointer-events:none" width="2596" height="2052"><g fill="none" stroke="rgba(0,0,0,0.32)" stroke-width="12.5" stroke-linecap="butt" stroke-linejoin="miter" transform="translate(6,6)"><g transform="translate(1899,1893) scale(0.73)"><path d="M20 6 L8 30"/><path d="M14 24 H50"/><path d="M4 50 H54"/><path d="M29 24 V52 Q26 78 6 94"/><path d="M31 60 L52 88"/><path d="M62 24 H94 V84 H62 Z"/></g><g transform="translate(1981,1892) scale(0.73)"><path d="M16 12 L84 4"/><path d="M28 24 L38 40"/><path d="M76 22 L64 40"/><path d="M4 52 H96"/><path d="M50 12 V88 Q50 98 36 94"/></g><g transform="translate(2157,1893) scale(0.7)"><path d="M10 12 H90"/><path d="M16 50 H84"/><path d="M4 90 H96"/><path d="M50 12 V90"/></g><g transform="translate(2230,1893) scale(0.73)"><path d="M30 10 V52 Q28 82 6 96"/><path d="M30 10 H66 V80 Q66 92 78 92 H96 V74"/></g><g transform="translate(2309,1891) scale(0.7)"><path d="M32 4 L10 30"/><path d="M36 30 L8 60"/><path d="M22 46 V98"/><path d="M48 14 H94"/><path d="M42 44 H98"/><path d="M72 44 V88 Q72 98 58 94"/></g></g><g fill="rgba(0,0,0,0.32)" transform="translate(6,6)" style="font-family:'Liberation Sans',sans-serif"><text x="2081" y="1951" font-size="72">@</text><text x="2378" y="1956" font-size="75" letter-spacing="4.5" stroke="rgba(0,0,0,0.32)" stroke-width="1.6">xing</text></g><g fill="none" stroke="#ffffff" stroke-width="12.5" stroke-linecap="butt" stroke-linejoin="miter" transform="translate(0,0)"><g transform="translate(1899,1893) scale(0.73)"><path d="M20 6 L8 30"/><path d="M14 24 H50"/><path d="M4 50 H54"/><path d="M29 24 V52 Q26 78 6 94"/><path d="M31 60 L52 88"/><path d="M62 24 H94 V84 H62 Z"/></g><g transform="translate(1981,1892) scale(0.73)"><path d="M16 12 L84 4"/><path d="M28 24 L38 40"/><path d="M76 22 L64 40"/><path d="M4 52 H96"/><path d="M50 12 V88 Q50 98 36 94"/></g><g transform="translate(2157,1893) scale(0.7)"><path d="M10 12 H90"/><path d="M16 50 H84"/><path d="M4 90 H96"/><path d="M50 12 V90"/></g><g transform="translate(2230,1893) scale(0.73)"><path d="M30 10 V52 Q28 82 6 96"/><path d="M30 10 H66 V80 Q66 92 78 92 H96 V74"/></g><g transform="translate(2309,1891) scale(0.7)"><path d="M32 4 L10 30"/><path d="M36 30 L8 60"/><path d="M22 46 V98"/><path d="M48 14 H94"/><path d="M42 44 H98"/><path d="M72 44 V88 Q72 98 58 94"/></g></g><g fill="#ffffff" transform="translate(0,0)" style="font-family:'Liberation Sans',sans-serif"><text x="2081" y="1951" font-size="72">@</text><text x="2378" y="1956" font-size="75" letter-spacing="4.5" stroke="#ffffff" stroke-width="1.6">xing</text></g></svg>
<div style="position:absolute;left:2416px;top:2017px;width:92px;height:27px;overflow:hidden"><svg width="92" height="27"><g fill="none" stroke="#1aa59a" stroke-width="5"><path d="M4 4 H26 M8 12 H24 M15 4 V24 M2 24 H28"/><path d="M36 4 H58 M40 12 H56 M47 4 V25 M34 18 H60 M40 24 L34 27 M54 24 L60 27"/><path d="M64 2 H88 V24 M64 2 V26 M68 8 L84 22 M84 8 L68 22"/></g></svg></div></body></html>
